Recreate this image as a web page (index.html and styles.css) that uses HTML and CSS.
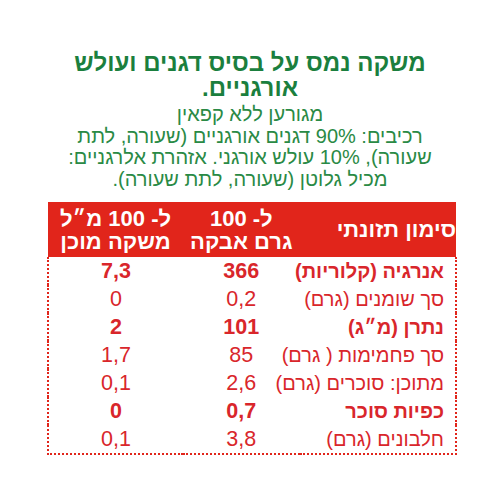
FILE: index.html
```html
<!DOCTYPE html>
<html lang="he" dir="rtl">
<head>
    <meta charset="UTF-8">
    <meta name="viewport" content="width=device-width, initial-scale=1.0">
    <title>סימון תזונתי</title>
    <link rel="stylesheet" href="styles.css">
</head>
<body>
    <div class="label">
        <h1 class="title">משקה נמס על בסיס דגנים ועולש<br>אורגניים.</h1>
        <p class="info">
            מגורען ללא קפאין<br>
            רכיבים: 90% דגנים אורגניים (שעורה, לתת<br>
            שעורה), 10% עולש אורגני. אזהרת אלרגניים:<br>
            מכיל גלוטן (שעורה, לתת שעורה).
        </p>

        <!-- Nutrition table -->
        <table class="nutrition">
            <thead>
                <tr>
                    <th class="col-name">סימון תזונתי</th>
                    <th class="col-powder">ל- 100<br>גרם אבקה</th>
                    <th class="col-drink">ל- 100 מ״ל<br>משקה מוכן</th>
                </tr>
            </thead>
            <tbody>
                <tr class="bold">
                    <td>אנרגיה (קלוריות)</td>
                    <td>366</td>
                    <td>7,3</td>
                </tr>
                <tr>
                    <td>סך שומנים (גרם)</td>
                    <td>0,2</td>
                    <td>0</td>
                </tr>
                <tr class="bold">
                    <td>נתרן (מ״ג)</td>
                    <td>101</td>
                    <td>2</td>
                </tr>
                <tr>
                    <td>סך פחמימות ( גרם)</td>
                    <td>85</td>
                    <td>1,7</td>
                </tr>
                <tr>
                    <td>מתוכן: סוכרים (גרם)</td>
                    <td>2,6</td>
                    <td>0,1</td>
                </tr>
                <tr class="bold">
                    <td>כפיות סוכר</td>
                    <td>0,7</td>
                    <td>0</td>
                </tr>
                <tr>
                    <td>חלבונים (גרם)</td>
                    <td>3,8</td>
                    <td>0,1</td>
                </tr>
            </tbody>
        </table>
    </div>
</body>
</html>
```

FILE: styles.css
```css
body {
    margin: 0;
    background-color: #ffffff;
    font-family: "Liberation Sans", Arial, sans-serif;
}
.label {
    width: 500px;
    padding-top: 50px;
    text-align: center;
}
.title {
    margin: 0;
    font-size: 24px;
    line-height: 25px;
    font-weight: 700;
    color: #1b7f3e;
}
.info {
    margin: 4px 0 0;
    font-size: 20px;
    line-height: 21.7px;
    color: #2a8a45;
}
/* Table */
.nutrition {
    width: 410px;
    margin: 11px 43px 0 47px;
    border-collapse: collapse;
    table-layout: fixed;
    color: #d9262b;
    font-size: 21.5px;
    white-space: nowrap;
}
.nutrition th {
    background-color: #e1251b;
    color: #ffffff;
    font-weight: 700;
    font-size: 22px;
    line-height: 23px;
    padding: 5px 0 4px;
    vertical-align: middle;
}
.nutrition tbody {
    border: 2px dotted #e1251b;
    border-top: none;
}
.nutrition td {
    height: 28px;
    padding: 0;
    line-height: 28px;
}
.col-name,
.nutrition td:first-child {
    text-align: right;
    padding-right: 11px;
}
.nutrition td:first-child {
    font-size: 20px;
}
.col-name {
    width: 153px;
}
.col-powder {
    width: 114px;
}
.col-drink {
    width: 132px;
}
.nutrition td:nth-child(2),
.nutrition td:nth-child(3) {
    text-align: center;
}
.nutrition tr.bold td {
    font-weight: 700;
}
```
